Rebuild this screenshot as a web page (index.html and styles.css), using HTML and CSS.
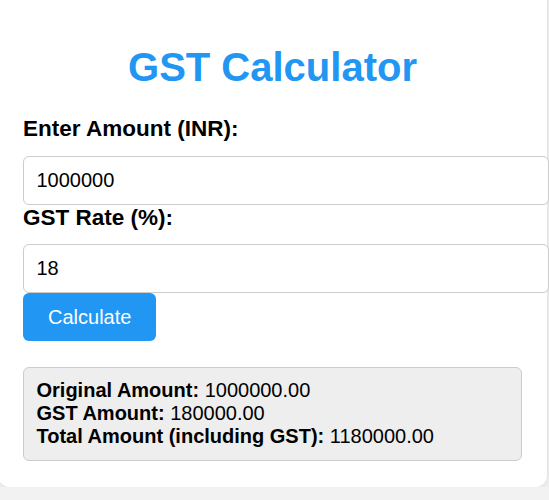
FILE: index.html
```html
<!DOCTYPE html>
<html lang="en">
<head>
<meta charset="utf-8">
<title>GST Calculator</title>
<link rel="stylesheet" href="styles.css">
</head>
<body>
<div class="container">
  <h1 class="title">GST Calculator</h1>
  <label class="field-label" for="amount">Enter Amount (INR):</label>
  <input class="field-input" id="amount" type="number" value="1000000">
  <label class="field-label" for="rate">GST Rate (%):</label>
  <input class="field-input" id="rate" type="number" value="18">
  <button class="calc-btn" type="button">Calculate</button>
  <div class="result">
    <div class="result-line"><strong>Original Amount:</strong> 1000000.00</div>
    <div class="result-line"><strong>GST Amount:</strong> 180000.00</div>
    <div class="result-line"><strong>Total Amount (including GST):</strong> 1180000.00</div>
  </div>
</div>
</body>
</html>
```
FILE: styles.css
```css
html, body {
  margin: 0;
  padding: 0;
}
body {
  background: #f2f2f2;
  font-family: "Liberation Sans", Arial, sans-serif;
  font-size: 20px;
  color: #000;
}
.container {
  width: 499px;
  margin: -11px 0 0 -2px;
  padding: 25px 25px 26px;
  background: #fff;
  border-radius: 12px;
  box-shadow: 0 0 12px rgba(0, 0, 0, 0.1);
}
.title {
  margin: 30.5px 0 26.8px;
  font-size: 40px;
  font-weight: bold;
  color: #2196f3;
  text-align: center;
  line-height: normal;
}
.field-label {
  display: block;
  font-size: 22.5px;
  font-weight: bold;
  margin-bottom: 13.5px;
}
.field-input {
  display: block;
  width: 100%;
  padding: 12px 12.5px;
  margin: 0;
  font-family: "Liberation Sans", Arial, sans-serif;
  font-size: 20px;
  line-height: normal;
  color: #000;
  border: 1px solid #ccc;
  border-radius: 6px;
  background: #fff;
  -moz-appearance: textfield;
  appearance: textfield;
}
.field-input::-webkit-outer-spin-button,
.field-input::-webkit-inner-spin-button {
  -webkit-appearance: none;
  margin: 0;
}
.calc-btn {
  display: block;
  margin: 0;
  padding: 12.5px 25px;
  font-family: "Liberation Sans", Arial, sans-serif;
  font-size: 20px;
  line-height: normal;
  color: #fff;
  background: #2196f3;
  border: none;
  border-radius: 6px;
}
.result {
  margin-top: 25.5px;
  padding: 11px 12.5px 12.5px;
  background: #eee;
  border: 1px solid #ccc;
  border-radius: 6px;
  line-height: normal;
}
```
